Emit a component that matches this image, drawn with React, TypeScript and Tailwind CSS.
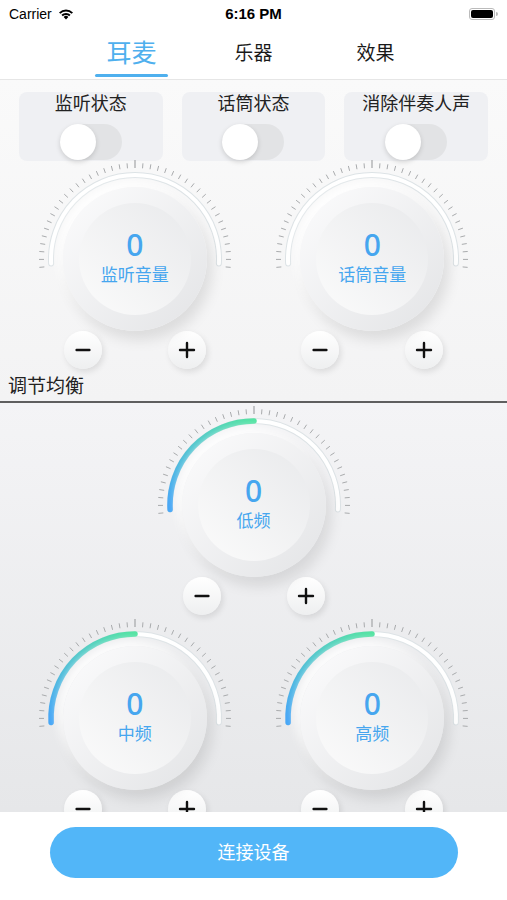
import { Minus, Plus } from "lucide-react";

const FONT = { fontFamily: '"Noto Sans", "Noto Sans CJK SC", sans-serif' };

const pt = (cx: number, cy: number, r: number, deg: number) => {
  const a = (deg * Math.PI) / 180;
  return [cx + r * Math.cos(a), cy - r * Math.sin(a)];
};

const arcPath = (cx: number, cy: number, r: number, from: number, to: number) => {
  const [x1, y1] = pt(cx, cy, r, from);
  const [x2, y2] = pt(cx, cy, r, to);
  const large = from - to > 180 ? 1 : 0;
  return `M ${x1} ${y1} A ${r} ${r} 0 ${large} 1 ${x2} ${y2}`;
};

const Dial = ({ id, eq }: { id: string; eq?: boolean }) => {
  const cx = 110;
  const cy = 100;
  const ticks = Array.from({ length: 41 }, (_, i) => -5 + (190 / 40) * i);
  return (
    <svg className="absolute inset-0" width={220} height={172}>
      <defs>
        <linearGradient id={id} gradientUnits="userSpaceOnUse" x1={cx - 85} y1={cy} x2={cx} y2={cy - 85}>
          <stop offset="0" stopColor="#45a6f6" />
          <stop offset="1" stopColor="#52e3a1" />
        </linearGradient>
      </defs>
      {ticks.map((t, i) => {
        const long = i === 20;
        const [x1, y1] = pt(cx, cy, 91, t);
        const [x2, y2] = pt(cx, cy, long ? 99 : 96, t);
        return <line key={i} x1={x1} y1={y1} x2={x2} y2={y2} stroke="#a9abad" strokeWidth={long ? 1.3 : 1} />;
      })}
      <path d={arcPath(cx, cy, 84, 183, -3)} fill="none" stroke="#dde3e6" strokeWidth={6} strokeLinecap="round" />
      <path d={arcPath(cx, cy, 84, 183, -3)} fill="none" stroke="#ffffff" strokeWidth={4} strokeLinecap="round" />
      {eq && (
        <path d={arcPath(cx, cy, 84, 183, 90)} fill="none" stroke={`url(#${id})`} strokeWidth={5.5} strokeLinecap="round" />
      )}
    </svg>
  );
};

const Knob = ({ id, label, eq }: { id: string; label: string; eq?: boolean }) => (
  <div className="flex flex-col items-center">
    <div className="relative w-[220px] h-[172px] flex justify-center pt-[28px]">
      <Dial id={id} eq={eq} />
      <div className="relative w-[144px] h-[144px] rounded-full bg-linear-to-br from-[#fcfcfd] to-[#e3e4e6] shadow-[5px_9px_14px_rgba(0,0,0,0.10),-5px_-5px_10px_rgba(255,255,255,0.9)] flex items-center justify-center">
        <div className="w-[112px] h-[112px] rounded-full bg-linear-to-tr from-[#fbfbfb] to-[#e9eaec] flex flex-col items-center justify-center text-[#46a6ef]">
          <span className="text-[30px] leading-[30px] font-medium">0</span>
          <span className="text-[17px] leading-[20px] mt-[5px] mb-[3px]">{label}</span>
        </div>
      </div>
    </div>
    <div className="flex gap-[66px] h-[38px]">
      <button className="w-[38px] h-[38px] rounded-full bg-linear-to-b from-[#ffffff] to-[#eeeff0] shadow-[2px_3px_6px_rgba(0,0,0,0.10)] flex items-center justify-center">
        <Minus size={22} strokeWidth={2.6} color="#111" />
      </button>
      <button className="w-[38px] h-[38px] rounded-full bg-linear-to-b from-[#ffffff] to-[#eeeff0] shadow-[2px_3px_6px_rgba(0,0,0,0.10)] flex items-center justify-center">
        <Plus size={24} strokeWidth={2.4} color="#111" />
      </button>
    </div>
  </div>
);

const ToggleCard = ({ label }: { label: string }) => (
  <div className="h-[69px] rounded-[8px] bg-[#eff0f3] flex flex-col items-center">
    <span className="text-[18px] leading-[22px] text-[#222]">{label}</span>
    <div className="mt-[10px] w-[62px] h-[36px] rounded-full bg-[#e2e3e5] p-[3px]">
      <div className="w-[36px] h-[36px] -mt-[3px] -ml-[3px] rounded-full bg-white shadow-[0_2px_5px_rgba(0,0,0,0.15)]" />
    </div>
  </div>
);

export default function App() {
  const tabs = ["耳麦", "乐器", "效果"];
  return (
    <div className="w-[507px] h-[900px] flex flex-col bg-white overflow-hidden" style={FONT}>
      <div className="h-[28px] flex items-center justify-between px-[9px] text-[14px] text-black">
        <div className="flex items-center gap-[6px] w-[120px]">
          <span style={{ fontFamily: '"Liberation Sans", sans-serif' }}>Carrier</span>
          <svg width="16" height="12" viewBox="0 0 16 12">
            <path d="M8 11.5 L5.6 9 A3.4 3.4 0 0 1 10.4 9 Z" fill="#000" />
            <path d="M3.4 6.8 A6.6 6.6 0 0 1 12.6 6.8 L11.2 8.2 A4.6 4.6 0 0 0 4.8 8.2 Z" fill="#000" />
            <path d="M1 4.4 A10 10 0 0 1 15 4.4 L13.6 5.8 A8 8 0 0 0 2.4 5.8 Z" fill="#000" />
          </svg>
        </div>
        <span className="text-[15px] font-semibold" style={{ fontFamily: '"Liberation Sans", sans-serif' }}>6:16 PM</span>
        <div className="w-[120px] flex justify-end items-center">
          <div className="w-[26px] h-[12px] rounded-[3px] border border-[#bbb] p-[1px]">
            <div className="w-full h-full rounded-[2px] bg-black" />
          </div>
          <div className="w-[2px] h-[4px] rounded-r-sm bg-[#bbb] ml-[1px]" />
        </div>
      </div>

      <div className="h-[52px] border-b border-[#e6e6e6] flex justify-center">
        {tabs.map((t, i) => (
          <div key={t} className="w-[122px] flex flex-col items-center">
            <span className={i === 0 ? "mt-[8px] text-[25px] leading-[32px] text-[#4fb0ee]" : "mt-[12px] text-[19px] leading-[26px] text-[#1a1a1a]"}>{t}</span>
            {i === 0 && <div className="mt-[6px] w-[73px] h-[3px] rounded-full bg-[#4fb0ee]" />}
          </div>
        ))}
      </div>

      <div className="bg-linear-to-b from-[#fafafa] to-[#f3f3f4]">
        <div className="px-[19px] pt-[12px] grid grid-cols-3 gap-[19px]">
          <ToggleCard label="监听状态" />
          <ToggleCard label="话筒状态" />
          <ToggleCard label="消除伴奏人声" />
        </div>
        <div className="-mt-[2px] px-[16px] grid grid-cols-2">
          <Knob id="g1" label="监听音量" />
          <Knob id="g2" label="话筒音量" />
        </div>
        <div className="px-[8px] mt-[6px] pb-[4px] text-[19px] leading-[22px] text-[#222]">调节均衡</div>
      </div>
      <div className="h-[2px] bg-[#5f5f5f]" />

      <div className="flex-1 overflow-hidden bg-linear-to-b from-[#f4f4f6] to-[#e6e7e9]">
        <div className="mt-[2px] flex justify-center">
          <Knob id="g3" label="低频" eq />
        </div>
        <div className="mt-[3px] px-[16px] grid grid-cols-2">
          <Knob id="g4" label="中频" eq />
          <Knob id="g5" label="高频" eq />
        </div>
      </div>

      <div className="h-[88px] bg-white flex justify-center pt-[15px]">
        <button className="w-[408px] h-[51px] rounded-full bg-[#52b6f8] text-white text-[18px]">连接设备</button>
      </div>
    </div>
  );
}
